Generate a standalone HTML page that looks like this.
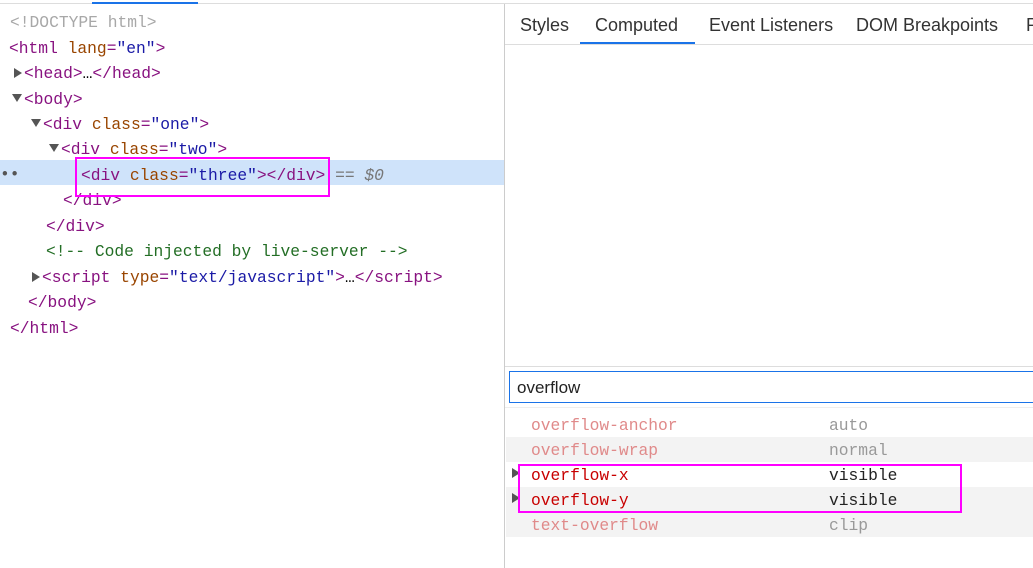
<!DOCTYPE html>
<html><head><style>
body{margin:0;width:1033px;height:568px;background:#fff;position:relative;overflow:hidden;font-family:"Liberation Mono",monospace;font-size:16.3px}
.a{position:absolute;white-space:pre}
.l{position:absolute;left:0;height:25px;line-height:25px;white-space:pre;margin-top:2px}
.t{color:#881280}.an{color:#994500}.av{color:#1a1aa6}.g{color:#a8a8a8}.c{color:#236e25}
.tri{display:inline-block;width:0;height:0}
.r{border-top:5px solid transparent;border-bottom:5px solid transparent;border-left:8px solid #555;margin-right:2px}
.d{border-left:5px solid transparent;border-right:5px solid transparent;border-top:8px solid #555;margin-right:2px;vertical-align:2px}
.tab{position:absolute;top:0;height:44px;line-height:50px;font-family:"Liberation Sans",sans-serif;font-size:18px;color:#333}
.row{position:absolute;left:506px;width:527px;height:25px;line-height:27px}
.p{position:absolute;left:25px}.v{position:absolute;left:323px}
</style></head><body>
<div class="a" style="left:0;top:3px;width:1033px;height:1px;background:#ddd"></div>
<div class="a" style="left:92px;top:2px;width:106px;height:2px;background:#1a73e8"></div>
<div class="a" style="left:0;top:160px;width:504px;height:25px;background:#cfe3fa"></div>
<div class="l" style="top:8px;left:10px" ><span class="g">&lt;!DOCTYPE html&gt;</span></div>
<div class="l" style="top:34px;left:9px"><span class="t">&lt;html </span><span class="an">lang</span><span class="t">=</span><span class="av">"en"</span><span class="t">&gt;</span></div>
<div class="l" style="top:59px;left:14px"><span class="tri r"></span><span class="t">&lt;head&gt;</span>…<span class="t">&lt;/head&gt;</span></div>
<div class="l" style="top:85px;left:12px"><span class="tri d"></span><span class="t">&lt;body&gt;</span></div>
<div class="l" style="top:110px;left:31px"><span class="tri d"></span><span class="t">&lt;div </span><span class="an">class</span><span class="t">=</span><span class="av">"one"</span><span class="t">&gt;</span></div>
<div class="l" style="top:135px;left:49px"><span class="tri d"></span><span class="t">&lt;div </span><span class="an">class</span><span class="t">=</span><span class="av">"two"</span><span class="t">&gt;</span></div>
<div class="l" style="top:160px;left:0;color:#555">••</div>
<div class="l" style="top:161px;left:81px"><span class="t">&lt;div </span><span class="an">class</span><span class="t">=</span><span class="av">"three"</span><span class="t">&gt;&lt;/div&gt;</span><span style="color:#777"> == <i>$0</i></span></div>
<div class="l" style="top:186px;left:63px"><span class="t">&lt;/div&gt;</span></div>
<div class="l" style="top:212px;left:46px"><span class="t">&lt;/div&gt;</span></div>
<div class="l" style="top:237px;left:46px"><span class="c">&lt;!-- Code injected by live-server --&gt;</span></div>
<div class="l" style="top:263px;left:32px"><span class="tri r"></span><span class="t">&lt;script </span><span class="an">type</span><span class="t">=</span><span class="av">"text/javascript"</span><span class="t">&gt;</span>…<span class="t">&lt;/script&gt;</span></div>
<div class="l" style="top:288px;left:28px"><span class="t">&lt;/body&gt;</span></div>
<div class="l" style="top:314px;left:10px"><span class="t">&lt;/html&gt;</span></div>
<div class="a" style="left:75px;top:157px;width:251px;height:36px;border:2px solid #f0f"></div>

<div class="a" style="left:504px;top:4px;width:1px;height:564px;background:#ccc"></div>
<div class="a" style="left:505px;top:44px;width:528px;height:1px;background:#ddd"></div>
<div class="tab" style="left:520px">Styles</div>
<div class="tab" style="left:595px">Computed</div>
<div class="tab" style="left:709px">Event Listeners</div>
<div class="tab" style="left:856px">DOM Breakpoints</div>
<div class="tab" style="left:1026px">P</div>
<div class="a" style="left:580px;top:42px;width:115px;height:2px;background:#1a73e8"></div>
<div class="a" style="left:505px;top:366px;width:528px;height:1px;background:#ddd"></div>
<div class="a" style="left:509px;top:371px;width:530px;height:30px;border:1px solid #1a73e8;font-family:'Liberation Sans',sans-serif;font-size:17px;line-height:32px;padding-left:7px;color:#222">overflow</div>
<div class="a" style="left:505px;top:407px;width:528px;height:1px;background:#eee"></div>
<div class="row" style="top:412px"><span class="p" style="color:#e08a8a">overflow-anchor</span><span class="v" style="color:#999">auto</span></div>
<div class="row" style="top:437px;background:#f3f3f3"><span class="p" style="color:#e08a8a">overflow-wrap</span><span class="v" style="color:#999">normal</span></div>
<div class="row" style="top:462px"><span class="tri r" style="position:absolute;left:6px;top:6px"></span><span class="p" style="color:#c80000">overflow-x</span><span class="v" style="color:#222">visible</span></div>
<div class="row" style="top:487px;background:#f3f3f3"><span class="tri r" style="position:absolute;left:6px;top:6px"></span><span class="p" style="color:#c80000">overflow-y</span><span class="v" style="color:#222">visible</span></div>
<div class="row" style="top:512px;background:#f3f3f3"><span class="p" style="color:#e08a8a">text-overflow</span><span class="v" style="color:#999">clip</span></div>
<div class="a" style="left:518px;top:464px;width:440px;height:45px;border:2px solid #f0f"></div>
</body></html>
